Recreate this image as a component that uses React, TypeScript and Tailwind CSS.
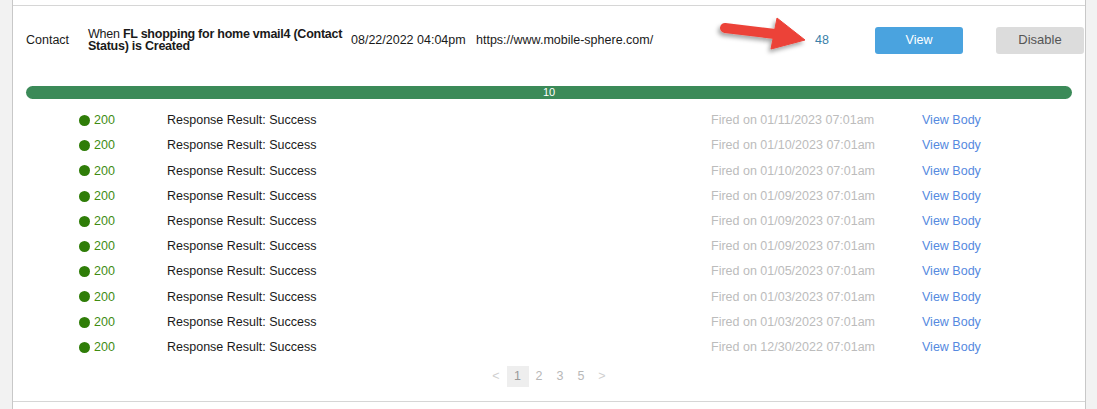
import React from "react";

const rows = [
  "01/11/2023",
  "01/10/2023",
  "01/10/2023",
  "01/09/2023",
  "01/09/2023",
  "01/09/2023",
  "01/05/2023",
  "01/03/2023",
  "01/03/2023",
  "12/30/2022",
];

export default function App() {
  return (
    <div
      className="relative h-[409px] w-full bg-[#f2f2f2] text-[12.5px] text-[#1a1a1a] overflow-hidden"
      style={{ fontFamily: '"Liberation Sans", Arial, sans-serif' }}
    >
      <div className="ml-[12px] w-[1074px] h-full bg-white border-l border-r border-[#c8c8c8] pt-[5px]">
        <div className="border-t border-b border-[#d6d6d6] px-[13px] pb-[14px]">
          {/* header row */}
          <div className="flex items-center h-[68px]">
            <div className="w-[62px] shrink-0">Contact</div>
            <div className="w-[263px] shrink-0 leading-[12px] tracking-[-0.25px]">
              When <b>FL shopping for home vmail4 (Contact Status) is Created</b>
            </div>
            <div className="w-[125px] shrink-0">08/22/2022 04:04pm</div>
            <div className="w-[339px] shrink-0">https://www.mobile-sphere.com/</div>
            <div className="w-[60px] shrink-0 text-[#3b7fa9]">48</div>
            <button className="w-[88px] h-[27px] shrink-0 rounded-[3px] bg-[#4aa3df] text-white">
              View
            </button>
            <button className="ml-[33px] w-[88px] h-[27px] shrink-0 rounded-[3px] bg-[#dcdcdc] text-[#555] text-[13px]">
              Disable
            </button>
          </div>

          {/* progress bar */}
          <div className="mt-[12px] h-[13px] rounded-full bg-[#3b8a58] flex items-center justify-center text-white text-[11px] leading-none">
            10
          </div>

          {/* rows */}
          <div className="mt-[9px]">
            {rows.map((d, i) => (
              <div key={i} className="flex items-center h-[25.2px]">
                <div className="ml-[53px] w-[88px] shrink-0 flex items-center gap-[4px]">
                  <span className="w-[11px] h-[11px] rounded-full bg-[#2f7d08] inline-block" />
                  <span className="text-[#3f8c12]">200</span>
                </div>
                <div className="w-[544px] shrink-0">Response Result: Success</div>
                <div className="w-[211px] shrink-0 text-[#bcbcbc]">Fired on {d} 07:01am</div>
                <div className="text-[#5589e0]">View Body</div>
              </div>
            ))}
          </div>

          {/* pagination */}
          <div className="mt-[6px] flex justify-center text-[12.5px]">
            <span className="w-[21px] h-[21px] leading-[21px] text-center text-[#cfcfcf]">&lt;</span>
            <span className="w-[22px] h-[21px] leading-[21px] text-center bg-[#eeeeee] text-[#9a9a9a]">1</span>
            <span className="w-[21px] h-[21px] leading-[21px] text-center text-[#b8b8b8]">2</span>
            <span className="w-[21px] h-[21px] leading-[21px] text-center text-[#b8b8b8]">3</span>
            <span className="w-[21px] h-[21px] leading-[21px] text-center text-[#b8b8b8]">5</span>
            <span className="w-[21px] h-[21px] leading-[21px] text-center text-[#cfcfcf]">&gt;</span>
          </div>
        </div>
      </div>

      {/* red annotation arrow */}
      <svg
        className="absolute left-[705px] top-[8px]"
        width="115"
        height="55"
        viewBox="0 0 115 55"
      >
        <defs>
          <filter id="sh" x="-20%" y="-30%" width="140%" height="170%">
            <feDropShadow dx="-2" dy="3" stdDeviation="2" floodColor="#000" floodOpacity="0.35" />
          </filter>
        </defs>
        <g filter="url(#sh)" fill="#ec4339" stroke="#ec4339">
          <line x1="20" y1="20" x2="70" y2="26" strokeWidth="10" strokeLinecap="round" />
          <polygon points="72,10 100,32 66,41" strokeWidth="1" strokeLinejoin="round" />
        </g>
      </svg>
    </div>
  );
}
